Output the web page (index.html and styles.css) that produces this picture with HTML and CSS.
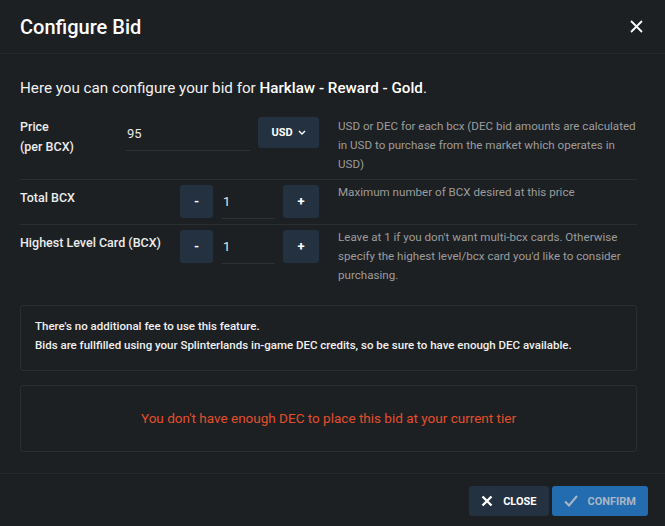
FILE: index.html
```html
<!DOCTYPE html>
<html lang="en">
<head>
    <meta charset="UTF-8">
    <meta name="viewport" content="width=device-width, initial-scale=1.0">
    <title>Configure Bid</title>
    <link rel="stylesheet" href="styles.css">
</head>
<body>

    <div class="modal">
        <div class="modal-header">
            <h2>Configure Bid</h2>
            <button type="button" class="header-close" aria-label="Close">
                <svg width="13" height="13" viewBox="0 0 13 13"><path d="M1 1 L12 12 M12 1 L1 12" stroke="#fff" stroke-width="1.8" fill="none"/></svg>
            </button>
        </div>

        <div class="modal-body">
            <p class="intro">Here you can configure your bid for <strong>Harklaw - Reward - Gold</strong>.</p>

            <div class="field-row">
                <div class="field-label">Price<br>(per BCX)</div>
                <div class="field-control">
                    <input type="text" class="line-input price-input" value="95">
                    <button type="button" class="btn-dark btn-currency">USD
                        <svg width="8" height="5" viewBox="0 0 8 5"><path d="M1 1 L4 4 L7 1" stroke="#fff" stroke-width="1.4" fill="none"/></svg>
                    </button>
                </div>
                <div class="field-help">USD or DEC for each bcx (DEC bid amounts are calculated in USD to purchase from the market which operates in USD)</div>
            </div>

            <div class="field-row stepper-row">
                <div class="field-label">Total BCX</div>
                <div class="field-control">
                    <button type="button" class="btn-dark btn-step">-</button>
                    <input type="text" class="line-input step-input" value="1">
                    <button type="button" class="btn-dark btn-step plus">+</button>
                </div>
                <div class="field-help">Maximum number of BCX desired at this price</div>
            </div>

            <div class="field-row stepper-row last">
                <div class="field-label">Highest Level Card (BCX)</div>
                <div class="field-control">
                    <button type="button" class="btn-dark btn-step">-</button>
                    <input type="text" class="line-input step-input" value="1">
                    <button type="button" class="btn-dark btn-step plus">+</button>
                </div>
                <div class="field-help">Leave at 1 if you don't want multi-bcx cards. Otherwise specify the highest level/bcx card you'd like to consider purchasing.</div>
            </div>

            <div class="notice">
                There's no additional fee to use this feature.<br>
                Bids are fullfilled using your Splinterlands in-game DEC credits, so be sure to have enough DEC available.
            </div>

            <div class="warning">You don't have enough DEC to place this bid at your current tier</div>
        </div>

        <div class="modal-footer">
            <button type="button" class="btn-dark btn-footer">
                <svg width="12" height="12" viewBox="0 0 12 12"><path d="M1.5 1.5 L10.5 10.5 M10.5 1.5 L1.5 10.5" stroke="#fff" stroke-width="2.4" fill="none"/></svg>
                Close
            </button>
            <button type="button" class="btn-confirm btn-footer">
                <svg width="14" height="12" viewBox="0 0 14 12"><path d="M1 6.5 L5 10.5 L13 1" stroke="#a9b6c4" stroke-width="2" fill="none"/></svg>
                Confirm
            </button>
        </div>
    </div>

</body>
</html>
```

FILE: styles.css
```css
body {
    font-family: Roboto, "Liberation Sans", Arial, sans-serif;
    background-color: #1d2023;
    color: #e8e8e8;
    margin: 0;
    padding: 0;
}

.modal {
    width: 665px;
    height: 526px;
    display: flex;
    flex-direction: column;
    background-color: #1d2023;
}

.modal-header {
    flex-shrink: 0;
    height: 53px;
    display: flex;
    align-items: center;
    justify-content: space-between;
    padding: 0 20px;
    border-bottom: 1px solid #25292c;
}

.modal-header h2 {
    margin: 0;
    font-size: 20px;
    font-weight: 500;
    color: #fff;
}

.header-close {
    background: none;
    border: none;
    padding: 0;
    margin-right: 2px;
    display: flex;
    cursor: pointer;
}

.modal-body {
    flex-grow: 1;
    padding: 23px 28px 0 20px;
}

.intro {
    margin: 0 0 13px;
    font-size: 15.2px;
    line-height: 22px;
    color: #f2f2f2;
}

.intro strong {
    font-weight: 500;
    color: #fff;
}

.field-row {
    display: grid;
    grid-template-columns: 106px 193px 1fr;
    padding: 5px 0;
    border-bottom: 1px solid #2a2e31;
}

.field-row.last {
    border-bottom: none;
}

.field-label {
    font-size: 12.5px;
    font-weight: 500;
    line-height: 20px;
    white-space: nowrap;
    color: #ececec;
}

.stepper-row .field-label {
    padding-top: 3px;
}

.field-control {
    display: flex;
    align-items: flex-start;
    justify-content: flex-end;
    gap: 8px;
}

.field-help {
    padding-left: 19px;
    font-size: 11.6px;
    line-height: 19px;
    color: #9c9c9c;
}

.stepper-row .field-help {
    margin-top: -2px;
}

.line-input {
    background: transparent;
    border: none;
    border-bottom: 1px solid #2d3134;
    color: #e8e8e8;
    font-family: inherit;
    font-size: 13px;
    outline: none;
    padding: 0 1px;
    box-sizing: border-box;
}

.price-input {
    width: 124px;
    height: 34px;
}

.step-input {
    width: 53px;
    height: 34px;
    margin-left: 1px;
}

.btn-dark {
    background-color: #243140;
    color: #fff;
    border: none;
    border-radius: 3px;
    font-family: inherit;
    cursor: pointer;
}

.btn-currency {
    width: 61px;
    height: 31px;
    font-size: 11px;
    font-weight: 700;
    display: flex;
    align-items: center;
    justify-content: center;
    gap: 5px;
}

.btn-step {
    width: 33px;
    height: 33px;
    font-size: 13px;
    font-weight: 700;
    padding: 0;
}

.btn-step.plus {
    width: 36px;
}

.notice {
    margin-top: 15px;
    padding: 11px 14px 15px;
    border: 1px solid #2a2e31;
    border-radius: 3px;
    font-size: 11.5px;
    font-weight: 500;
    line-height: 19px;
    color: #f0f0f0;
}

.warning {
    margin-top: 14px;
    padding: 22px 10px;
    border: 1px solid #2a2e31;
    border-radius: 3px;
    font-size: 13.5px;
    line-height: 21px;
    text-align: center;
    color: #e24f2b;
}

.modal-footer {
    flex-shrink: 0;
    display: flex;
    justify-content: flex-end;
    gap: 3px;
    padding: 12px 17px 10px;
    border-top: 1px solid #25292c;
}

.btn-footer {
    height: 30px;
    display: flex;
    align-items: center;
    gap: 10px;
    padding: 0 12px;
    font-size: 11px;
    font-weight: 700;
    text-transform: uppercase;
    border-radius: 3px;
}

.btn-confirm {
    background-color: #236cb0;
    color: #a9b6c4;
    border: none;
    font-family: inherit;
    cursor: pointer;
}
```
